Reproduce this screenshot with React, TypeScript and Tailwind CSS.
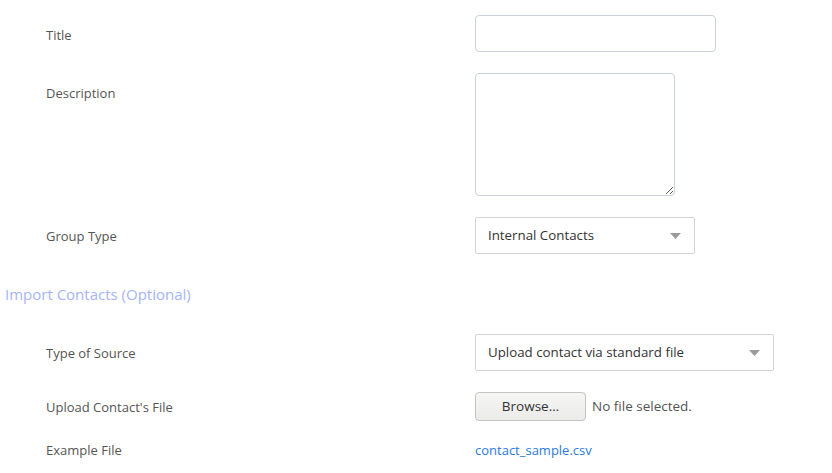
import { useState } from 'react';

function Caret() {
  return (
    <svg width="11" height="6" viewBox="0 0 11 6" className="shrink-0">
      <path d="M0 0 L11 0 L5.5 6 Z" fill="#9a9a9a" />
    </svg>
  );
}

function Row({ label, children, labelPad = 'pt-[10px]', className = '' }: { label: string; children: React.ReactNode; labelPad?: string; className?: string }) {
  return (
    <div className={`flex items-start ${className}`}>
      <div className={`w-[475px] shrink-0 pl-[46px] text-[13px] leading-5 text-[#555] ${labelPad}`}>{label}</div>
      <div>{children}</div>
    </div>
  );
}

export default function App() {
  const [title, setTitle] = useState('');
  const [desc, setDesc] = useState('');

  return (
    <div className="min-h-screen bg-white pt-[15px] font-['Open_Sans',sans-serif]">
      {/* Group details */}
      <Row label="Title">
        <input
          value={title}
          onChange={(e) => setTitle(e.target.value)}
          className="block h-[37px] w-[241px] rounded-[4px] border border-[#ccd0d7] px-3 text-[13px] outline-none"
        />
      </Row>

      <Row label="Description" className="mt-[21px]">
        <textarea
          value={desc}
          onChange={(e) => setDesc(e.target.value)}
          className="block h-[123px] w-[200px] rounded-[4px] border border-[#ccd0d7] px-3 py-2 text-[13px] outline-none"
        />
      </Row>

      <Row label="Group Type" labelPad="pt-[9px]" className="mt-[21px]">
        <div className="flex h-[37px] w-[220px] items-center justify-between rounded-[2px] border border-[#d5d5d5] pl-[12px] pr-[13px] text-[13.3px] text-[#333]">
          <span>Internal Contacts</span>
          <Caret />
        </div>
      </Row>

      {/* Import section */}
      <h3 className="mt-[30px] pl-[5px] text-[15px] leading-5 text-[#a5b4fc]">Import Contacts (Optional)</h3>

      <Row label="Type of Source" labelPad="pt-[9px]" className="mt-[30px]">
        <div className="flex h-[37px] w-[299px] items-center justify-between rounded-[2px] border border-[#d5d5d5] pl-[12px] pr-[13px] text-[13.3px] text-[#333]">
          <span>Upload contact via standard file</span>
          <Caret />
        </div>
      </Row>

      <Row label="Upload Contact's File" labelPad="pt-[5px]" className="mt-[21px]">
        <div className="flex items-center gap-[6px]">
          <button className="h-[29px] w-[111px] rounded-[4px] border border-[#c4c4c4] bg-gradient-to-b from-[#f6f6f5] to-[#ebebea] text-[13.5px] text-[#333]">
            Browse…
          </button>
          <span className="text-[13.5px] text-[#555]">No file selected.</span>
        </div>
      </Row>

      <Row label="Example File" labelPad="pt-0" className="mt-[19px]">
        <a href="#" className="block text-[13px] leading-5 text-[#2a7ae2]">contact_sample.csv</a>
      </Row>
    </div>
  );
}
